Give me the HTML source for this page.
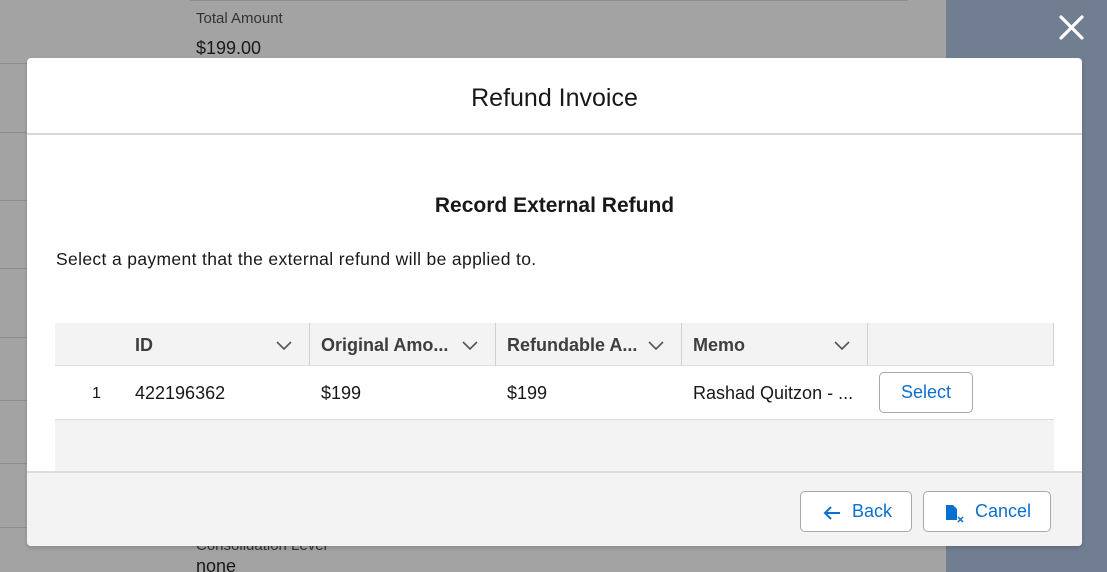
<!DOCTYPE html>
<html><head><style>
*{box-sizing:border-box;margin:0;padding:0}
html{width:1107px;height:572px;overflow:hidden}
body{width:1107px;height:572px;overflow:hidden;position:relative;background:#a3a3a3;font-family:"Liberation Sans",Arial,sans-serif;color:#181818}
.slate{position:absolute;left:946px;top:0;width:161px;height:572px;background:#717d91}
.hl{position:absolute;height:1px;background:#8e8e8e}
.bgtxt{position:absolute;font-size:16px;color:#1a1a1a}
.modal{position:absolute;left:27px;top:58px;width:1055px;height:488px;background:#fff;border-radius:4px;overflow:hidden;box-shadow:0 2px 4px rgba(0,0,0,.15)}
.hdr{height:77px;border-bottom:2px solid #d8d8d8;text-align:center;font-size:25px;line-height:80px;color:#181818}
.foot{position:absolute;left:0;top:413px;width:100%;height:75px;background:#f3f3f3;border-top:2px solid #dcdcdc}
.btn{position:absolute;height:41px;border:1px solid #a8a8a8;border-radius:5px;background:#fff;color:#0b6fcf;font-size:18px;line-height:39px}
.th{position:absolute;top:265px;height:43px;background:#f3f3f3;border-bottom:1px solid #e0e0e0}
.tht{position:absolute;top:277px;font-size:18px;font-weight:bold;color:#3e3e3e}
.sep{position:absolute;top:265px;width:1px;height:43px;background:#d0d0d0}
.td{position:absolute;top:325px;font-size:18px;color:#181818}
.chev{position:absolute;top:279px}
</style></head><body>
<div class="slate"></div>
<div class="hl" style="left:0;top:63px;width:75px"></div>
<div class="hl" style="left:0;top:132px;width:75px"></div>
<div class="hl" style="left:0;top:200px;width:27px"></div>
<div class="hl" style="left:0;top:268px;width:27px"></div>
<div class="hl" style="left:0;top:337px;width:27px"></div>
<div class="hl" style="left:0;top:400px;width:27px"></div>
<div class="hl" style="left:0;top:463px;width:27px"></div>
<div class="hl" style="left:0;top:527px;width:27px"></div>
<div class="hl" style="left:190px;top:0;width:718px"></div>
<div class="bgtxt" style="left:196px;top:10px;font-size:15px;color:#333">Total Amount</div>
<div class="bgtxt" style="left:196px;top:38px;font-size:18px">$199.00</div>
<div class="bgtxt" style="left:196px;top:537px;font-size:15px;color:#333">Consolidation Level</div>
<div class="bgtxt" style="left:196px;top:560px;font-size:18px;line-height:12px;height:12px;overflow:hidden">none</div>
<svg style="position:absolute;left:1058px;top:14px" width="27" height="27" viewBox="0 0 27 27"><path d="M3 3L24 24M24 3L3 24" stroke="#fff" stroke-width="3.2" stroke-linecap="round"/></svg>
<div class="modal">
<div class="hdr">Refund Invoice</div>
<div style="position:absolute;top:136px;width:100%;text-align:center;font-size:21px;font-weight:bold">Record External Refund</div>
<div style="position:absolute;left:29px;top:191px;font-size:17.5px;letter-spacing:0.35px">Select a payment that the external refund will be applied to.</div>
<div class="th" style="left:28px;width:999px"></div>
<div class="sep" style="left:282px"></div><div class="sep" style="left:468px"></div><div class="sep" style="left:654px"></div><div class="sep" style="left:840px"></div><div class="sep" style="left:1026px"></div>
<div class="tht" style="left:108px">ID</div>
<div class="tht" style="left:294px">Original Amo...</div>
<div class="tht" style="left:480px">Refundable A...</div>
<div class="tht" style="left:666px">Memo</div>
<svg class="chev" style="left:249px" width="16" height="16"><path d="M1 5l7 7 7-7" fill="none" stroke="#555" stroke-width="1.6"/></svg>
<svg class="chev" style="left:435px" width="16" height="16"><path d="M1 5l7 7 7-7" fill="none" stroke="#555" stroke-width="1.6"/></svg>
<svg class="chev" style="left:621px" width="16" height="16"><path d="M1 5l7 7 7-7" fill="none" stroke="#555" stroke-width="1.6"/></svg>
<svg class="chev" style="left:807px" width="16" height="16"><path d="M1 5l7 7 7-7" fill="none" stroke="#555" stroke-width="1.6"/></svg>
<div class="td" style="left:65px;font-size:16px;top:327px">1</div>
<div class="td" style="left:108px">422196362</div>
<div class="td" style="left:294px">$199</div>
<div class="td" style="left:480px">$199</div>
<div class="td" style="left:666px">Rashad Quitzon - ...</div>
<div class="btn" style="left:852px;top:314px;width:94px;text-align:center">Select</div>
<div style="position:absolute;left:28px;top:361px;width:999px;height:52px;background:#f3f3f3;border-top:1px solid #dcdcdc"></div>
<div class="foot">
<div class="btn" style="left:773px;top:18px;width:112px"><svg style="position:absolute;left:21px;top:13px" width="20" height="16"><path d="M18 8H3M9 2L3 8l6 6" fill="none" stroke="#0b6fcf" stroke-width="2"/></svg><span style="position:absolute;left:51px">Back</span></div>
<div class="btn" style="left:896px;top:18px;width:128px"><svg style="position:absolute;left:20px;top:12px" width="22" height="20"><path d="M2 1h7l4 4v11H2z" fill="#0b6fcf"/><path d="M14 13l5 5M19 13l-5 5" stroke="#0b6fcf" stroke-width="1.5"/></svg><span style="position:absolute;left:51px">Cancel</span></div>
</div>
</div>
</body></html>
